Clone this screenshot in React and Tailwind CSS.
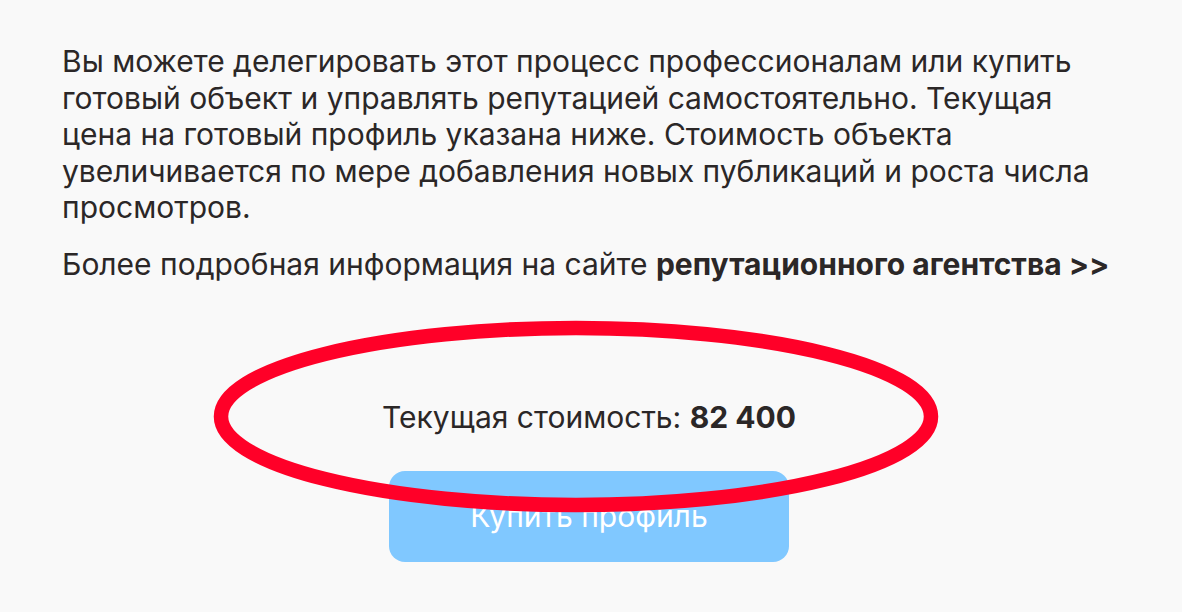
export default function App() {
  return (
    <div className="relative w-[1182px] h-[612px] bg-[#f9f9f9] text-[#2b2727] overflow-hidden" style={{ fontFamily: 'Inter, "Noto Sans", sans-serif' }}>
      <div className="pl-[62px] pt-[43px] text-[30px] leading-[36.5px]">
        <p className="w-[1040px]">
          Вы можете делегировать этот процесс профессионалам или купить готовый объект и управлять репутацией самостоятельно. Текущая цена на готовый профиль указана ниже. Стоимость объекта увеличивается по мере добавления новых публикаций и роста числа просмотров.
        </p>
        <p className="mt-[20px] whitespace-nowrap">
          Более подробная информация на сайте <b className="font-bold">репутационного агентства &gt;&gt;</b>
        </p>
      </div>

      <div className="flex flex-col items-center mt-[115px]">
        <div className="h-[40px] flex items-center text-[30px] ml-[-4px]">
          <span>Текущая стоимость: <b className="font-bold">82 400</b></span>
        </div>
        <button className="mt-[34px] ml-[-4px] w-[400px] h-[91px] rounded-[16px] bg-[#80c8ff] text-white text-[30px]">
          Купить профиль
        </button>
      </div>

      {/* hand-drawn highlight ring around the price */}
      <svg className="absolute left-[206px] top-[312px] pointer-events-none" width="740" height="210" viewBox="0 0 740 210">
        <ellipse cx="370" cy="104.5" rx="355" ry="88.5" fill="none" stroke="#ff0028" strokeWidth="14.5" />
      </svg>
    </div>
  );
}
